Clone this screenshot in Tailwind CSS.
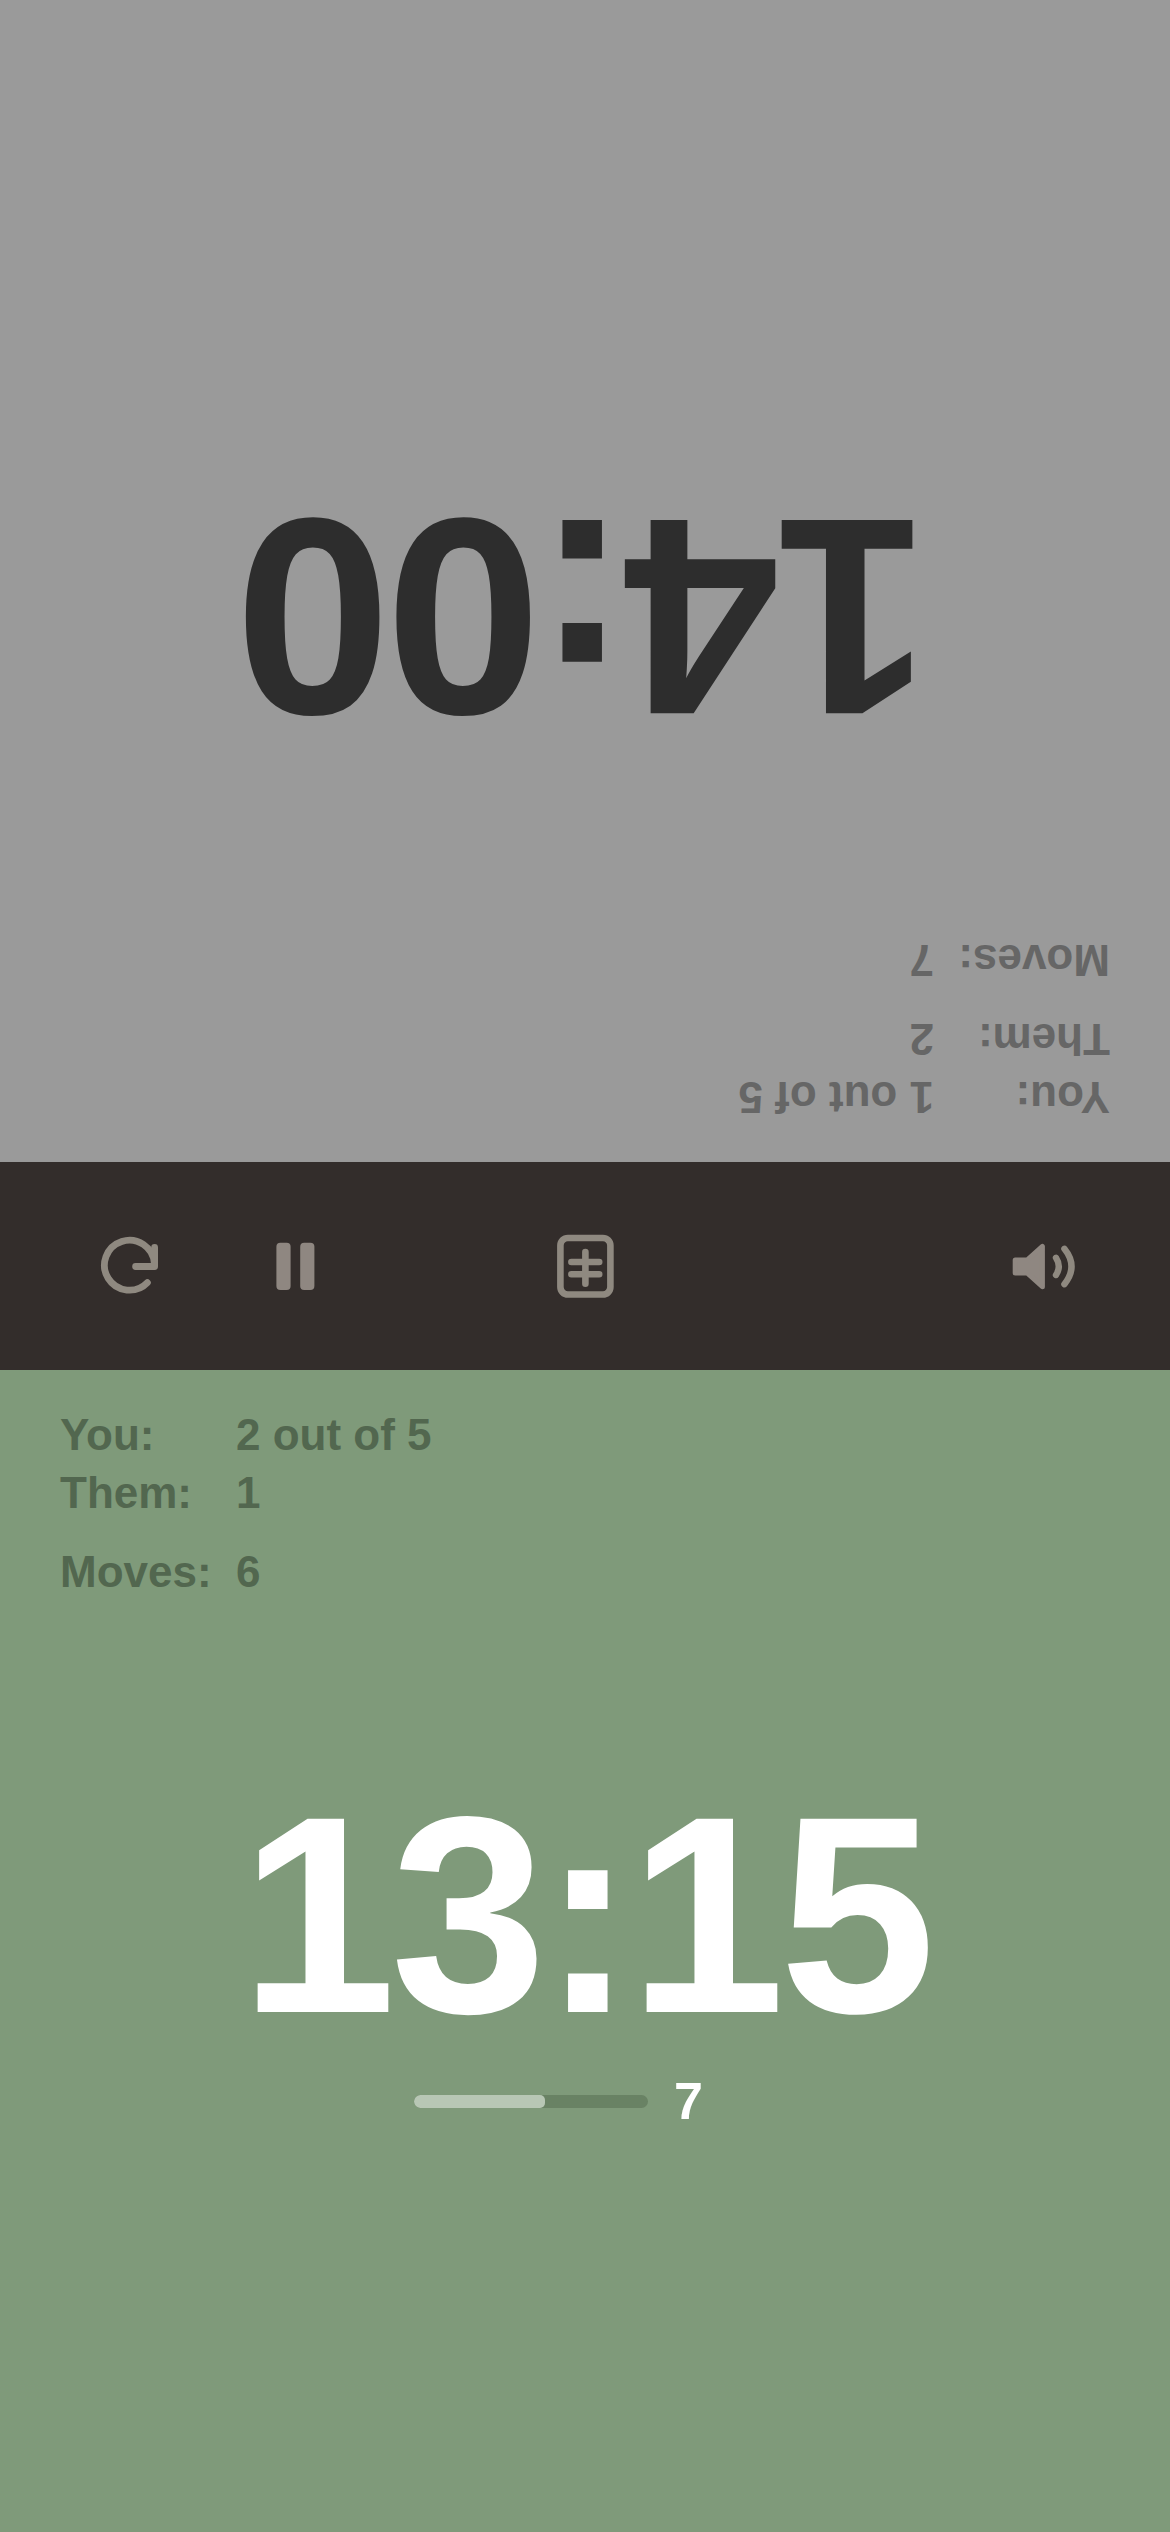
<!DOCTYPE html>
<html lang="en">
<head>
<meta charset="utf-8">
<title>Game Clock</title>
<script src="https://cdn.jsdelivr.net/npm/@tailwindcss/browser@4"></script>
</head>
<body class="flex h-[2532px] w-[1170px] flex-col overflow-hidden font-['Liberation_Sans',Arial,sans-serif] font-bold">

  <!-- Opponent's side, facing the other way -->
  <section class="flex h-[1162px] shrink-0 rotate-180 flex-col bg-[#9a9a9a]">
    <dl class="grid grid-cols-[176px_auto] px-[60px] pt-[36px] text-[44px] leading-[58px] text-[#666666]">
      <dt>You:</dt><dd>1 out of 5</dd>
      <dt>Them:</dt><dd>2</dd>
      <dt class="mt-[21px]">Moves:</dt><dd class="mt-[21px]">7</dd>
    </dl>
    <div class="mt-[174px] text-center text-[280.8px] leading-[280px] tracking-[-5.616px] text-[#2d2d2d]">14:00</div>
  </section>

  <!-- Controls -->
  <nav class="flex h-[208px] shrink-0 items-center bg-[#332d2b] text-[#8f8980]">
    <button class="ml-[94px]" aria-label="Restart">
      <svg class="block" width="72" height="72" viewBox="94 1230 72 72" fill="none" stroke="currentColor" stroke-width="6.8" stroke-linecap="round" stroke-linejoin="round">
        <path d="M154.4 1263.5A25 25 0 1 0 147.4 1282.6"/>
        <path d="M154.6 1247.4V1266.5H135.6"/>
      </svg>
    </button>
    <button class="ml-[93px]" aria-label="Pause">
      <svg class="block" width="72" height="72" viewBox="259 1230 72 72" fill="#8f8781">
        <rect x="276.4" y="1242.8" width="14.2" height="47.2" rx="4"/>
        <rect x="300.2" y="1242.8" width="14.2" height="47.2" rx="4"/>
      </svg>
    </button>
    <button class="ml-[218px]" aria-label="Adjust time">
      <svg class="block" width="72" height="72" viewBox="549 1230 72 72" fill="none" stroke="currentColor" stroke-width="6.6" stroke-linecap="round">
        <rect x="560.4" y="1238" width="50" height="56.5" rx="7.5"/>
        <path d="M585.4 1252v31.8M571.4 1262h27.8M571.4 1274.3h27.8"/>
      </svg>
    </button>
    <button class="ml-[386px]" aria-label="Sound">
      <svg class="block" width="72" height="72" viewBox="1007 1230 72 72" fill="none" stroke="currentColor" stroke-width="6.4" stroke-linecap="round" stroke-linejoin="round">
        <path fill="#8f8781" stroke="#8f8781" stroke-width="5" d="M1015.2 1260.1H1027.1L1042.4 1246.3V1286.7L1027.1 1272.9H1015.2Z"/>
        <path d="M1056 1257.8Q1061.6 1266.4 1056 1275"/>
        <path d="M1064.4 1248.8Q1078.6 1266.5 1064.4 1284.2"/>
      </svg>
    </button>
  </nav>

  <!-- Active player's side -->
  <section class="flex h-[1162px] shrink-0 flex-col bg-[#7f9a7a]">
    <dl class="grid grid-cols-[176px_auto] px-[60px] pt-[36px] text-[44px] leading-[58px] text-[#52674f]">
      <dt>You:</dt><dd>2 out of 5</dd>
      <dt>Them:</dt><dd>1</dd>
      <dt class="mt-[21px]">Moves:</dt><dd class="mt-[21px]">6</dd>
    </dl>
    <div class="mt-[174px] text-center text-[280.8px] leading-[280px] tracking-[-5.616px] text-white">13:15</div>
    <div class="mt-[16px] flex items-center justify-center gap-[26px]">
      <div class="h-[13px] w-[234px] overflow-hidden rounded-full bg-[#698264]">
        <div class="h-full rounded-[5px] bg-[#b8c7b5]" style="width:56%"></div>
      </div>
      <span class="w-[82px] text-[52px] leading-[60px] text-white">7</span>
    </div>
  </section>
</body>
</html>
